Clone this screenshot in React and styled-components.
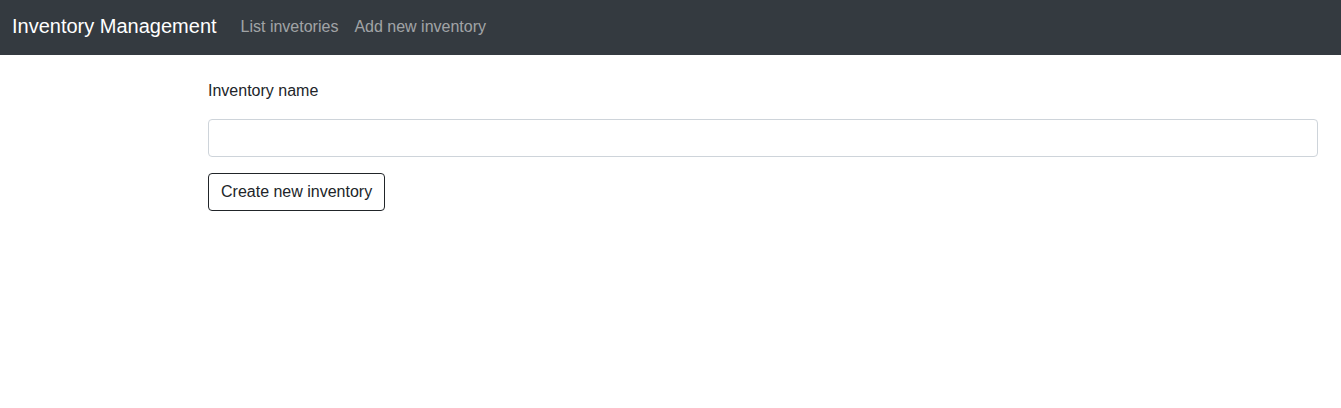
import React from "react";
import styled, { createGlobalStyle } from "styled-components";

const Global = createGlobalStyle`
  html, body { margin: 0; padding: 0; background: #fff; }
  body {
    font-family: "Liberation Sans", Arial, sans-serif;
    font-size: 16px;
    line-height: 1.5;
    color: #212529;
  }
  * { box-sizing: border-box; }
`;

const Navbar = styled.nav`
  background: #343a40;
  height: 55px;
  display: flex;
  align-items: center;
  padding: 0 12px 2px;
`;

const Brand = styled.a`
  font-size: 20px;
  line-height: 30px;
  color: #fff;
  text-decoration: none;
  margin-right: 16px;
  padding: 4px 0 6px;
`;

const NavList = styled.ul`
  display: flex;
  list-style: none;
  margin: 0;
  padding: 0;
`;

const NavLink = styled.a`
  display: block;
  padding: 8px;
  color: rgba(255, 255, 255, 0.55);
  text-decoration: none;
  font-size: 16px;
  line-height: 24px;
`;

const Main = styled.main`
  padding: 24px 23px 0 208px;
`;

const Label = styled.label`
  display: block;
  line-height: 24px;
  margin-bottom: 16px;
`;

const Input = styled.input`
  display: block;
  width: 100%;
  height: 38px;
  padding: 6px 12px;
  font: inherit;
  color: #212529;
  border: 1px solid #ced4da;
  border-radius: 4px;
  background: #fff;
  margin-bottom: 16px;
`;

const Button = styled.button`
  font: inherit;
  line-height: 24px;
  height: 38px;
  padding: 6px 12px;
  color: #212529;
  background: transparent;
  border: 1px solid #212529;
  border-radius: 4px;
  cursor: pointer;
`;

export default function App() {
  return (
    <>
      <Global />
      <Navbar>
        <Brand href="#">Inventory Management</Brand>
        <NavList>
          <li><NavLink href="#">List invetories</NavLink></li>
          <li><NavLink href="#">Add new inventory</NavLink></li>
        </NavList>
      </Navbar>
      <Main>
        <form onSubmit={(e) => e.preventDefault()}>
          <Label htmlFor="name">Inventory name</Label>
          <Input id="name" type="text" />
          <Button type="submit">Create new inventory</Button>
        </form>
      </Main>
    </>
  );
}
